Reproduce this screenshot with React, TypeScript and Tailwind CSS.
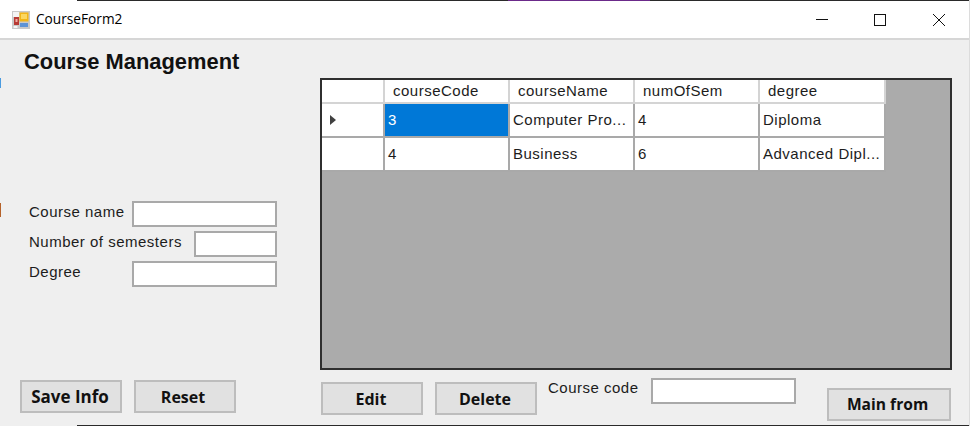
const labelFont = "font-['Liberation_Sans',sans-serif] text-[15px] tracking-[0.5px] text-[#1c1c1c]";

const columns = [
  { key: "courseCode", width: "w-[125px]", pad: "pl-[8px]" },
  { key: "courseName", width: "w-[125px]", pad: "pl-[8px]" },
  { key: "numOfSem", width: "w-[125px]", pad: "pl-[8px]" },
  { key: "degree", width: "w-[126px]", pad: "pl-[8px]" },
];

const rows = [
  { courseCode: "3", courseName: "Computer Pro...", numOfSem: "4", degree: "Diploma" },
  { courseCode: "4", courseName: "Business", numOfSem: "6", degree: "Advanced Dipl..." },
];

function FormButton({ label, className }: { label: string; className: string }) {
  return (
    <button
      className={`h-[33px] border-2 border-[#bdbdbd] bg-[#e1e1e1] pr-[2px] font-['Open_Sans',sans-serif] font-bold text-[#111] ${className}`}
    >
      {label}
    </button>
  );
}

function TextBox({ className }: { className: string }) {
  return <input className={`h-[26px] border-2 border-[#a9a9a9] bg-white ${className}`} />;
}

function AppIcon() {
  return (
    <svg className="h-[18px] w-[18px]" viewBox="0 0 18 18">
      <rect width="18" height="18" fill="#c9c9c9" />
      <rect x="1" y="1" width="6" height="5" fill="#f4f4f4" />
      <rect x="2" y="6" width="5" height="8" fill="#b83a34" />
      <rect x="3.5" y="8" width="2" height="3" fill="#efb0a8" />
      <rect x="7.5" y="1.5" width="9" height="9" fill="#f3b516" />
      <rect x="9" y="3" width="6" height="5" fill="#fbd760" />
      <rect x="8" y="12" width="8" height="4" fill="#5d93d6" />
      <rect x="1.5" y="15" width="4" height="2" fill="#f4f4f4" />
    </svg>
  );
}

export default function App() {
  return (
    <div className="relative flex h-[426px] w-[970px] flex-col overflow-hidden border-r border-[#dcdcdc] bg-[#efefef]">
      {/* bits of the desktop showing at the window edges */}
      <span className="absolute left-0 top-[78px] h-[10px] w-px bg-[#4a9be0]" />
      <span className="absolute left-0 top-[203px] h-[14px] w-px bg-[#b5622a]" />

      <div className="flex h-px shrink-0">
        <div className="w-[77px] bg-white" />
        <div className="w-[431px] bg-[#2a2a2a]" />
        <div className="w-[142px] bg-[#6b2a8a]" />
        <div className="flex-1 bg-[#2a2a2a]" />
      </div>

      {/* title bar */}
      <div className="flex h-[39px] shrink-0 items-center border-b-2 border-[#d6d6d6] bg-white pl-[12px]">
        <AppIcon />
        <span className="ml-[6px] font-['Open_Sans',sans-serif] text-[13.7px] text-black">CourseForm2</span>
        <div className="ml-auto flex items-center">
          <svg className="mr-[44px] h-[14px] w-[14px]" viewBox="0 0 14 14" stroke="#111" fill="none">
            <path d="M1 6.5h12" />
          </svg>
          <svg className="mr-[45px] h-[14px] w-[14px]" viewBox="0 0 14 14" stroke="#111" fill="none">
            <rect x="1.5" y="1.5" width="11" height="11" />
          </svg>
          <svg className="mr-[23px] h-[14px] w-[14px]" viewBox="0 0 14 14" stroke="#111" fill="none">
            <path d="M1 1l12 12M13 1L1 13" />
          </svg>
        </div>
      </div>

      <div className="flex min-h-0 flex-1">
        {/* left column */}
        <div className="flex w-[320px] shrink-0 flex-col">
          <h1 className="ml-[24px] mt-[9px] font-['Liberation_Sans',sans-serif] text-[21.9px] font-bold leading-[26px] text-[#111]">
            Course Management
          </h1>
          <div className="ml-[29px] mt-[126px] flex w-[248px] flex-col gap-[4px]">
            <div className="flex items-center justify-between">
              <span className={`${labelFont} -mt-[3px]`}>Course name</span>
              <TextBox className="w-[145px]" />
            </div>
            <div className="flex items-center justify-between">
              <span className={`${labelFont} -mt-[3px]`}>Number of semesters</span>
              <TextBox className="w-[83px]" />
            </div>
            <div className="flex items-center justify-between">
              <span className={`${labelFont} -mt-[3px]`}>Degree</span>
              <TextBox className="w-[145px]" />
            </div>
          </div>
          <div className="ml-[20px] mt-[93px] flex gap-[12px]">
            <FormButton label="Save Info" className="w-[102px] text-[17px]" />
            <FormButton label="Reset" className="w-[102px] !pr-[4px] text-[16px]" />
          </div>
        </div>

        {/* right column */}
        <div className="flex flex-1 flex-col">
          <div className="mt-[38px] h-[292px] w-[632px] border-2 border-[#2f2f2f] bg-[#ababab]">
            <table className="table-fixed border-collapse bg-white font-['Liberation_Sans',sans-serif] text-[15px] leading-[18px] tracking-[0.5px] text-[#1c1c1c]">
              <thead>
                <tr className="h-[23px]">
                  <th className="w-[62px] border-r-2 border-b-2 border-[#d4d4d4]" />
                  {columns.map((col) => (
                    <th key={col.key} className={`${col.width} ${col.pad} border-r-2 border-b-2 border-[#d4d4d4] text-left font-normal`}>
                      {col.key}
                    </th>
                  ))}
                </tr>
              </thead>
              <tbody>
                {rows.map((row, i) => (
                  <tr key={row.courseCode} className="h-[34px]">
                    <td className="border-r-2 border-b-2 border-[#a9a9a9]">
                      {i === 0 && (
                        <svg className="ml-[7px] h-[12px] w-[8px]" viewBox="0 0 8 12" fill="#404040">
                          <path d="M1 1l6 5-6 5z" />
                        </svg>
                      )}
                    </td>
                    {columns.map((col, c) => (
                      <td
                        key={col.key}
                        className={`overflow-hidden whitespace-nowrap border-r-2 border-b-2 border-[#a9a9a9] pb-[1px] pl-[3px] ${i === 0 && c === 0 ? "bg-[#0078d7] text-white" : ""}`}
                      >
                        {row[col.key as keyof typeof row]}
                      </td>
                    ))}
                  </tr>
                ))}
              </tbody>
            </table>
          </div>
          <div className="flex items-start">
            <FormButton label="Edit" className="ml-[1px] mt-[12px] w-[102px] text-[16px]" />
            <FormButton label="Delete" className="ml-[12px] mt-[12px] w-[102px] text-[16px]" />
            <span className={`${labelFont} ml-[11px] mt-[7px]`}>Course code</span>
            <TextBox className="ml-[12px] mt-[8px] w-[145px]" />
            <FormButton label="Main from" className="ml-[31px] mt-[18px] w-[124px] text-[15.6px]" />
          </div>
        </div>
      </div>

      <div className="flex h-px shrink-0">
        <div className="w-[77px]" />
        <div className="flex-1 bg-[#2a2a2a]" />
      </div>
    </div>
  );
}
